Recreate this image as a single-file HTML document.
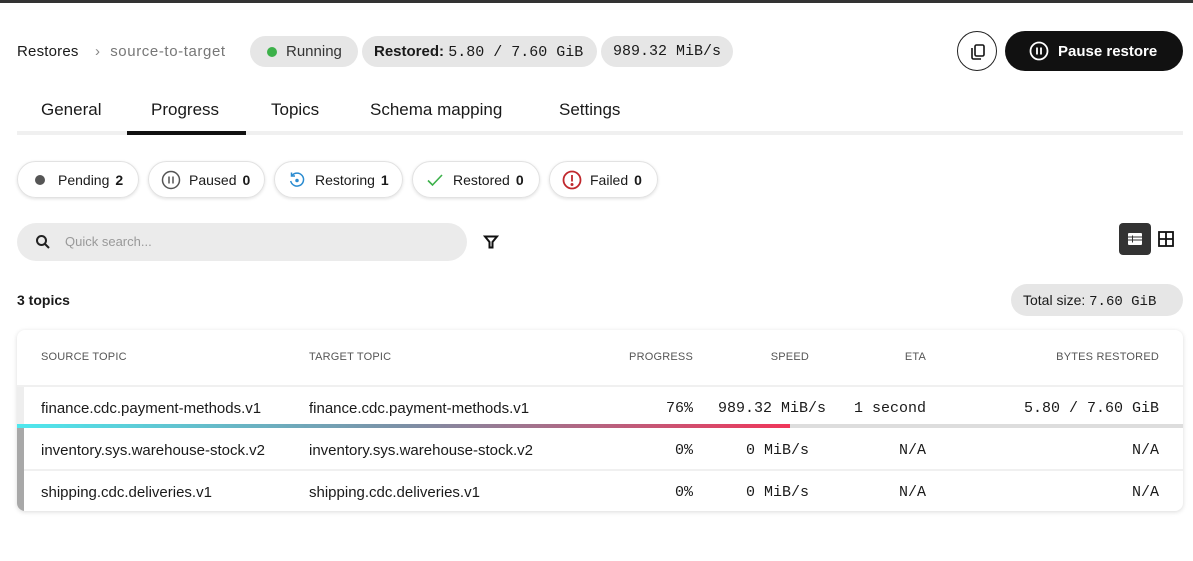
<!DOCTYPE html>
<html><head><meta charset="utf-8"><style>
*{box-sizing:border-box;margin:0;padding:0}
body{width:1193px;height:561px;background:#fff;font-family:"Liberation Sans",sans-serif;color:#1a1a1a;position:relative;overflow:hidden}
.a{position:absolute}
.mono{font-family:"Liberation Mono",monospace}
.pill{position:absolute;background:#e6e6e6;border-radius:16px;height:31px;top:36px;font-size:15px;line-height:31px;padding:0 12px;white-space:nowrap}
.chip{position:absolute;top:161px;height:37px;border:1px solid #e2e2e2;border-radius:19px;box-shadow:0 1px 3px rgba(0,0,0,.12);font-size:14px;line-height:36px;padding-left:40px;white-space:nowrap}
.chip b{margin-left:6px}
.chip svg{position:absolute;left:12px;top:8px}
.tab{position:absolute;top:100px;font-size:17px}
.th{position:absolute;top:351px;font-size:11px;color:#555;letter-spacing:.2px}
.td{position:absolute;font-size:15px;white-space:nowrap}
.tr{text-align:right}
</style></head><body>
<div class="a" style="left:0;top:0;width:1193px;height:3px;background:#333"></div>
<div class="a" style="left:17px;top:43px;font-size:15px;letter-spacing:.2px">Restores <span style="color:#888;margin:0 10px 0 12px">›</span><span style="color:#777;letter-spacing:.6px">source-to-target</span></div>
<div class="pill" style="left:250px;width:108px;padding-left:36px;color:#333;line-height:32px"><span class="a" style="left:17px;top:11px;width:10px;height:10px;border-radius:50%;background:#3cb14a"></span>Running</div>
<div class="pill" style="left:362px;width:235px;line-height:32px"><b style="font-weight:600">Restored:</b> <span class="mono">5.80 / 7.60 GiB</span></div>
<div class="pill mono" style="left:601px;width:132px;line-height:32px">989.32 MiB/s</div>
<div class="a" style="left:957px;top:31px;width:40px;height:40px;border:1px solid #222;border-radius:50%"><svg class="a" style="left:11px;top:11px" width="18" height="18" viewBox="0 0 18 18" fill="none" stroke="#111" stroke-width="1.6"><rect x="6" y="2" width="9" height="11" rx="1.5"/><path d="M3 5v9.5a1.5 1.5 0 0 0 1.5 1.5H12"/></svg></div>
<div class="a" style="left:1005px;top:31px;width:178px;height:40px;background:#111;border-radius:20px;color:#fff;font-size:15px;font-weight:bold;line-height:41px;padding-left:53px">Pause restore<svg class="a" style="left:24px;top:10px" width="20" height="20" viewBox="0 0 20 20" fill="none" stroke="#fff" stroke-width="1.8"><circle cx="10" cy="10" r="8.5"/><path d="M8 6.5v7M12 6.5v7"/></svg></div>
<div class="tab" style="left:41px">General</div>
<div class="tab" style="left:151px">Progress</div>
<div class="tab" style="left:271px">Topics</div>
<div class="tab" style="left:370px">Schema mapping</div>
<div class="tab" style="left:559px">Settings</div>
<div class="a" style="left:17px;top:131px;width:1166px;height:4px;background:#f0f0f0"></div>
<div class="a" style="left:127px;top:131px;width:119px;height:4px;background:#111"></div>

<div class="chip" style="left:17px;width:122px"><svg width="20" height="20"><circle cx="10" cy="10" r="5" fill="#555"/></svg>Pending<b>2</b></div>
<div class="chip" style="left:148px;width:117px"><svg width="20" height="20" fill="none" stroke="#555" stroke-width="1.5"><circle cx="10" cy="10" r="8.5"/><path d="M8 6.5v7M12 6.5v7"/></svg>Paused<b>0</b></div>
<div class="chip" style="left:274px;width:129px"><svg width="20" height="20" fill="none" stroke="#2a8bd0" stroke-width="1.5"><path d="M5 5.5A6.5 6.5 0 1 1 3.7 11"/><path d="M4.5 2.5v3.5h3.5"/><circle cx="10" cy="10.5" r="1" fill="#2a8bd0"/></svg>Restoring<b>1</b></div>
<div class="chip" style="left:412px;width:128px"><svg width="20" height="20" fill="none" stroke="#3cb14a" stroke-width="1.6"><path d="M3 10.5l4.5 4.5L17 5"/></svg>Restored<b>0</b></div>
<div class="chip" style="left:549px;width:109px"><svg width="20" height="20" fill="none" stroke="#c0282d" stroke-width="1.8"><circle cx="10" cy="10" r="8.5"/><path d="M10 5v6.5"/><circle cx="10" cy="14.5" r=".6" fill="#c0282d"/></svg>Failed<b>0</b></div>

<div class="a" style="left:17px;top:223px;width:450px;height:38px;background:#ebebeb;border-radius:19px;font-size:13px;color:#999;line-height:38px;padding-left:48px">Quick search...<svg class="a" style="left:18px;top:11px" width="16" height="16" fill="none" stroke="#222" stroke-width="2"><circle cx="6.5" cy="6.5" r="4.5"/><path d="M10 10l4 4"/></svg></div>
<svg class="a" style="left:483px;top:234px" width="16" height="16" fill="none" stroke="#111" stroke-width="2"><path d="M2 2.5h12L9.5 8v5.5h-3V8z"/></svg>
<div class="a" style="left:1119px;top:223px;width:32px;height:32px;background:#333;border-radius:4px"><svg class="a" style="left:8px;top:8px" width="16" height="16" fill="#fff"><rect x="1" y="2" width="14" height="12" rx="1"/><g fill="#333"><rect x="5" y="4.5" width="1" height="7"/><rect x="1" y="5.5" width="14" height="1"/><rect x="1" y="8.5" width="14" height="1"/></g></svg></div>
<svg class="a" style="left:1158px;top:231px" width="16" height="16" fill="none" stroke="#111" stroke-width="1.8"><rect x="1" y="1" width="14" height="14"/><path d="M8 1v14M1 8h14"/></svg>

<div class="a" style="left:17px;top:292px;font-size:14px;font-weight:bold">3 topics</div>
<div class="a" style="left:1011px;top:284px;width:172px;height:32px;background:#e6e6e6;border-radius:16px;font-size:14px;line-height:33px;padding-left:12px">Total size: <span class="mono">7.60 GiB</span></div>

<div class="a" style="left:17px;top:330px;width:1166px;height:181px;border-radius:8px;background:#fff;box-shadow:0 1px 5px rgba(0,0,0,.15);overflow:hidden">
<div class="a" style="left:0;top:55px;width:1166px;height:2px;background:#f0f0f0"></div>
<div class="a" style="left:0;top:57px;width:7px;height:40px;background:#eee"></div>
<div class="a" style="left:0;top:94px;width:1166px;height:4px;background:#ddd"></div>
<div class="a" style="left:0;top:94px;width:773px;height:4px;background:linear-gradient(90deg,#4ee8ee,#7c90a6 50%,#f0365a)"></div>
<div class="a" style="left:0;top:98px;width:7px;height:83px;background:#a8a8a8"></div>
<div class="a" style="left:7px;top:139px;width:1159px;height:2px;background:#f0f0f0"></div>
</div>
<div class="th" style="left:41px">SOURCE TOPIC</div>
<div class="th" style="left:309px">TARGET TOPIC</div>
<div class="th" style="left:593px;width:100px;text-align:right">PROGRESS</div>
<div class="th" style="left:709px;width:100px;text-align:right">SPEED</div>
<div class="th" style="left:826px;width:100px;text-align:right">ETA</div>
<div class="th" style="left:959px;width:200px;text-align:right">BYTES RESTORED</div>

<div class="td" style="left:41px;top:400px">finance.cdc.payment-methods.v1</div>
<div class="td" style="left:309px;top:400px">finance.cdc.payment-methods.v1</div>
<div class="td mono tr" style="left:593px;width:100px;top:400px">76%</div>
<div class="td mono tr" style="left:696px;width:130px;top:400px">989.32 MiB/s</div>
<div class="td mono tr" style="left:806px;width:120px;top:400px">1 second</div>
<div class="td mono tr" style="left:959px;width:200px;top:400px">5.80 / 7.60 GiB</div>

<div class="td" style="left:41px;top:442px">inventory.sys.warehouse-stock.v2</div>
<div class="td" style="left:309px;top:442px">inventory.sys.warehouse-stock.v2</div>
<div class="td mono tr" style="left:593px;width:100px;top:442px">0%</div>
<div class="td mono tr" style="left:679px;width:130px;top:442px">0 MiB/s</div>
<div class="td mono tr" style="left:806px;width:120px;top:442px">N/A</div>
<div class="td mono tr" style="left:959px;width:200px;top:442px">N/A</div>

<div class="td" style="left:41px;top:484px">shipping.cdc.deliveries.v1</div>
<div class="td" style="left:309px;top:484px">shipping.cdc.deliveries.v1</div>
<div class="td mono tr" style="left:593px;width:100px;top:484px">0%</div>
<div class="td mono tr" style="left:679px;width:130px;top:484px">0 MiB/s</div>
<div class="td mono tr" style="left:806px;width:120px;top:484px">N/A</div>
<div class="td mono tr" style="left:959px;width:200px;top:484px">N/A</div>
</body></html>
